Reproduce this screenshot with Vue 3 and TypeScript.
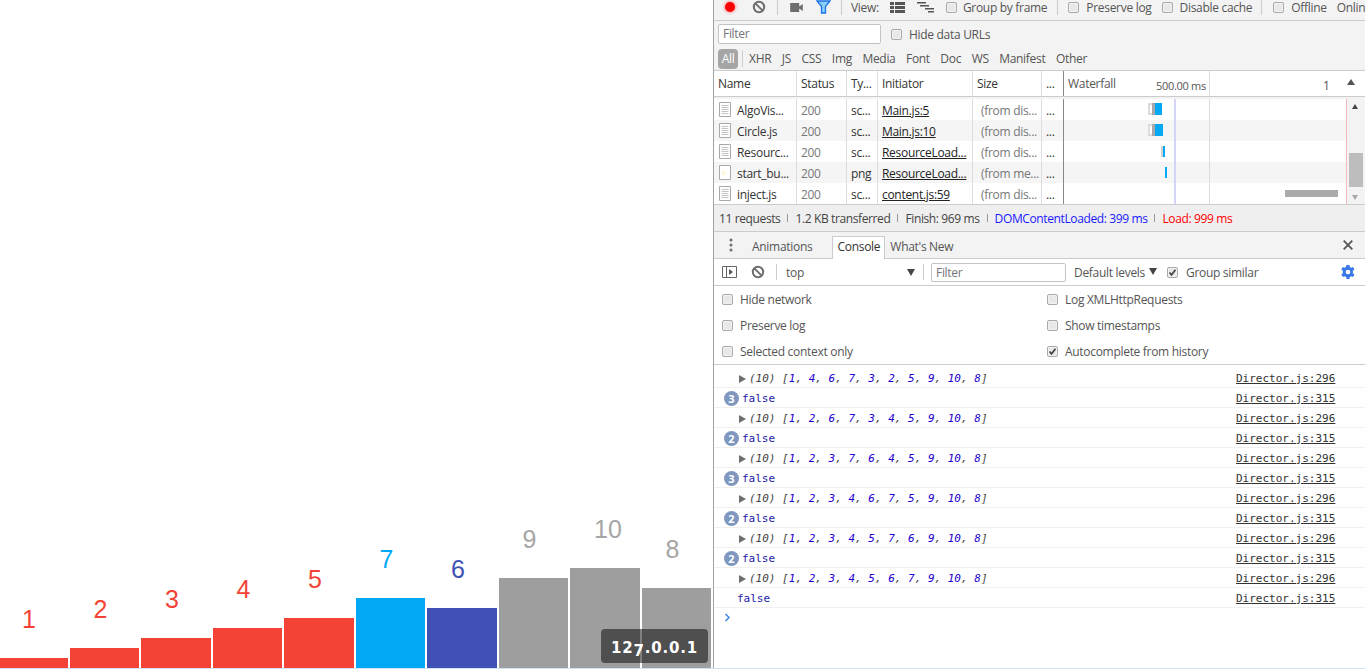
<script setup lang="ts">
interface Bar { value: number; color: string }
interface WfBar { left: number; width: number; top: number; height: number; color: string }
interface NetRow { name: string; type: string; initiator: string; size: string; icon: 'doc' | 'img'; bars: WfBar[] }
interface LogRow { kind: 'array' | 'false'; nums?: number[]; count?: number; file: string }

const RED = '#f44336'
const CYAN = '#03a9f4'
const INDIGO = '#3f51b5'
const GREY = '#9e9e9e'

const bars: Bar[] = [
  { value: 1, color: RED }, { value: 2, color: RED }, { value: 3, color: RED }, { value: 4, color: RED },
  { value: 5, color: RED }, { value: 7, color: CYAN }, { value: 6, color: INDIGO }, { value: 9, color: GREY },
  { value: 10, color: GREY }, { value: 8, color: GREY },
]

const queued = (end: number): WfBar[] => [
  { left: 84, width: 8, top: 4, height: 12, color: '#dcdcdc' },
  { left: 86, width: 2, top: 6, height: 8, color: '#ffffff' },
  { left: 88, width: 3, top: 4, height: 12, color: '#a8a8a8' },
  { left: 91, width: end, top: 4, height: 12, color: CYAN },
]

const netRows: NetRow[] = [
  { name: 'AlgoVis...', type: 'sc...', initiator: 'Main.js:5', size: '(from dis...', icon: 'doc', bars: queued(7) },
  { name: 'Circle.js', type: 'sc...', initiator: 'Main.js:10', size: '(from dis...', icon: 'doc', bars: queued(8) },
  { name: 'Resourc...', type: 'sc...', initiator: 'ResourceLoad...', size: '(from dis...', icon: 'doc', bars: [
    { left: 97, width: 2, top: 5, height: 11, color: '#d0d0d0' }, { left: 99, width: 2, top: 5, height: 11, color: CYAN } ] },
  { name: 'start_bu...', type: 'png', initiator: 'ResourceLoad...', size: '(from me...', icon: 'img', bars: [
    { left: 101, width: 2, top: 5, height: 11, color: CYAN } ] },
  { name: 'inject.js', type: 'sc...', initiator: 'content.js:59', size: '(from dis...', icon: 'doc', bars: [
    { left: 221, width: 53, top: 7, height: 7, color: '#aaaaaa' } ] },
]

const netColumns = ['Name', 'Status', 'Ty...', 'Initiator', 'Size', '...']

const settingsLeft = [
  { label: 'Hide network', on: false }, { label: 'Preserve log', on: false }, { label: 'Selected context only', on: false },
]
const settingsRight = [
  { label: 'Log XMLHttpRequests', on: false }, { label: 'Show timestamps', on: false }, { label: 'Autocomplete from history', on: true },
]

const logs: LogRow[] = [
  { kind: 'array', nums: [1, 4, 6, 7, 3, 2, 5, 9, 10, 8], file: 'Director.js:296' },
  { kind: 'false', count: 3, file: 'Director.js:315' },
  { kind: 'array', nums: [1, 2, 6, 7, 3, 4, 5, 9, 10, 8], file: 'Director.js:296' },
  { kind: 'false', count: 2, file: 'Director.js:315' },
  { kind: 'array', nums: [1, 2, 3, 7, 6, 4, 5, 9, 10, 8], file: 'Director.js:296' },
  { kind: 'false', count: 3, file: 'Director.js:315' },
  { kind: 'array', nums: [1, 2, 3, 4, 6, 7, 5, 9, 10, 8], file: 'Director.js:296' },
  { kind: 'false', count: 2, file: 'Director.js:315' },
  { kind: 'array', nums: [1, 2, 3, 4, 5, 7, 6, 9, 10, 8], file: 'Director.js:296' },
  { kind: 'false', count: 2, file: 'Director.js:315' },
  { kind: 'array', nums: [1, 2, 3, 4, 5, 6, 7, 9, 10, 8], file: 'Director.js:296' },
  { kind: 'false', file: 'Director.js:315' },
]

const types = ['XHR', 'JS', 'CSS', 'Img', 'Media', 'Font', 'Doc', 'WS', 'Manifest', 'Other']
</script>

<template>
  <div class="page">
    <div class="main">
      <section class="viz">
        <div class="bars">
          <div v-for="bar in bars" :key="bar.value" class="col">
            <span class="num" :style="{ color: bar.color === GREY ? '#a6a6a6' : bar.color }">{{ bar.value }}</span>
            <div class="bar" :style="{ height: bar.value * 10 + 'px', background: bar.color }"></div>
          </div>
        </div>
        <div class="host">12<span class="low">7</span>.0.0.1</div>
      </section>

      <section class="devtools">
        <!-- network panel -->
        <div class="toolbar net-top">
          <span class="record"></span>
          <svg class="ico block1" width="14" height="14" viewBox="0 0 14 14"><circle cx="7" cy="7" r="5.2" fill="none" stroke="#6e6e6e" stroke-width="2" /><path d="M3.4 3.4l7.2 7.2" stroke="#6e6e6e" stroke-width="2" /></svg>
          <i class="sep sep1"></i>
          <svg class="ico cam" width="13" height="9" viewBox="0 0 14 10"><path d="M0 0h10v10H0zM10 4l4-3v8l-4-3z" fill="#6e6e6e" /></svg>
          <svg class="ico funnel" width="15" height="14" viewBox="0 0 15 14"><path d="M1 1h13L9.5 6.5V13h-4V6.500z" fill="#8ccdf7" stroke="#1a73e8" stroke-width="1.300" /></svg>
          <i class="sep sep2"></i>
          <span class="txt view">View:</span>
          <svg class="ico list" width="15" height="11" viewBox="0 0 15 11"><path d="M0 0h4v3H0zM5 0h10v3H5zM0 4h4v3H0zM5 4h10v3H5zM0 8h4v3H0zM5 8h10v3H5z" fill="#555" /></svg>
          <svg class="ico tree" width="17" height="11" viewBox="0 0 17 11"><path d="M0 0h9v1.500H0zM3 3h9v1.500H3zM8 6h9v1.500H8zM11 9h6v1.500h-6z" fill="#555" /></svg>
          <span class="check c-group"></span><span class="txt">Group by frame</span>
          <i class="sep sep3"></i>
          <span class="check c-pres"></span><span class="txt">Preserve log</span>
          <span class="check c-dis"></span><span class="txt">Disable cache</span>
          <i class="sep sep4"></i>
          <span class="check c-off"></span><span class="txt">Offline</span>
          <span class="txt online">Online</span>
        </div>

        <div class="filter-row">
          <span class="input net-filter">Filter</span>
          <span class="check c-hide"></span><span class="txt">Hide data URLs</span>
        </div>

        <div class="type-row">
          <span class="all">All</span>
          <i class="sep sep-all"></i>
          <span v-for="t in types" :key="t" class="txt type">{{ t }}</span>
        </div>

        <div class="net-head">
          <span v-for="c in netColumns" :key="c" class="cell">{{ c }}</span>
          <div class="wf-head">
            <span class="txt wf-title">Waterfall</span>
            <span class="txt wf-time">500.00 ms</span>
            <span class="txt wf-one">1</span>
            <i class="tri-up"></i>
          </div>
        </div>

        <div class="net-body">
          <div class="net-table">
            <div v-for="(row, i) in netRows" :key="row.name" class="net-row" :class="{ odd: i % 2 === 1 }">
              <span class="cell name-cell">
                <svg width="12" height="15" viewBox="0 0 12 15" class="file-ico">
                  <path d="M.5.500h11v14H.5z" fill="#fff" stroke="#a9a9a9" />
                  <path v-if="row.icon === 'doc'" d="M2.500 3.500h7M2.500 5.500h7M2.500 7.500h7M2.500 9.500h7M2.500 11.500h7" stroke="#c4c4c4" />
                  <path v-else d="M3 5l5 3-5 3z" fill="#fdf6d8" />
                </svg>
                {{ row.name }}
              </span>
              <span class="cell muted">200</span>
              <span class="cell">{{ row.type }}</span>
              <span class="cell link">{{ row.initiator }}</span>
              <span class="cell muted size">{{ row.size }}</span>
              <span class="cell">...</span>
              <div class="wf-cell">
                <i v-for="(b, j) in row.bars" :key="j" class="wf-bar" :style="{ left: b.left + 'px', width: b.width + 'px', top: b.top + 'px', height: b.height + 'px', background: b.color }"></i>
              </div>
            </div>
            <i class="grid-line blue"></i>
            <i class="grid-line gray"></i>
            <i class="grid-line red"></i>
          </div>
          <div class="scroll">
            <i class="tri-up small"></i>
            <i class="thumb"></i>
            <i class="tri-down"></i>
          </div>
        </div>

        <div class="summary">
          <span>11 requests</span><i class="bar-sep"></i>
          <span>1.2 KB transferred</span><i class="bar-sep"></i>
          <span>Finish: 969 ms</span><i class="bar-sep"></i>
          <span class="dom">DOMContentLoaded: 399 ms</span><i class="bar-sep"></i>
          <span class="load">Load: 999 ms</span>
        </div>

        <!-- drawer -->
        <div class="tabs">
          <svg class="ico kebab" width="4" height="14" viewBox="0 0 4 14"><circle cx="2" cy="2" r="1.500" fill="#6e6e6e" /><circle cx="2" cy="7" r="1.500" fill="#6e6e6e" /><circle cx="2" cy="12" r="1.500" fill="#6e6e6e" /></svg>
          <span class="txt tab-anim">Animations</span>
          <span class="tab-on">Console</span>
          <span class="txt tab-new">What's New</span>
          <svg class="ico close" width="10" height="10" viewBox="0 0 10 10"><path d="M.700.700l8.600 8.600M9.300.700L.700 9.300" stroke="#555" stroke-width="1.800" /></svg>
        </div>

        <div class="con-bar">
          <svg class="ico side" width="15" height="12" viewBox="0 0 15 12"><path d="M.5.500h14v11H.5zM4.500.500v11" fill="none" stroke="#666" /><path d="M7 3l4 3-4 3z" fill="#555" /></svg>
          <svg class="ico block2" width="14" height="14" viewBox="0 0 14 14"><circle cx="7" cy="7" r="5.200" fill="none" stroke="#6e6e6e" stroke-width="2" /><path d="M3.400 3.400l7.200 7.200" stroke="#6e6e6e" stroke-width="2" /></svg>
          <i class="sep sep5"></i>
          <span class="txt ctx">top</span>
          <i class="tri-dn-big"></i>
          <i class="sep sep6"></i>
          <span class="input con-filter">Filter</span>
          <span class="txt levels">Default levels</span>
          <i class="tri-dn-big lv"></i>
          <span class="check on c-sim"><svg width="11" height="11" viewBox="0 0 11 11"><path d="M2.500 5.500l2 2.300L8.500 2.800" fill="none" stroke="#444" stroke-width="1.700" /></svg></span>
          <span class="txt">Group similar</span>
          <svg class="ico gear" width="14" height="14" viewBox="0 0 24 24"><path fill="#3b78e7" fill-rule="evenodd" d="M14.500 0l.6 3.400c.8.300 1.500.700 2.200 1.200l3.200-1.200 2.500 4.300-2.700 2.200a9 9 0 0 1 0 4.200l2.700 2.200-2.500 4.300-3.200-1.200c-.7.500-1.400.900-2.200 1.200l-.6 3.400h-5l-.6-3.400c-.8-.3-1.500-.7-2.200-1.200l-3.200 1.200L.5 16.300l2.700-2.200a9 9 0 0 1 0-4.200L.5 7.700 3 3.400l3.200 1.200c.7-.5 1.400-.9 2.200-1.200L9.500 0zM12 8a4 4 0 1 0 0 8 4 4 0 0 0 0-8z" /></svg>
        </div>

        <div class="settings">
          <div class="set-col">
            <label v-for="s in settingsLeft" :key="s.label" class="set-item"><span class="check"></span><span class="txt">{{ s.label }}</span></label>
          </div>
          <div class="set-col right">
            <label v-for="s in settingsRight" :key="s.label" class="set-item">
              <span class="check" :class="{ on: s.on }"><svg v-if="s.on" width="11" height="11" viewBox="0 0 11 11"><path d="M2.500 5.500l2 2.300L8.500 2.800" fill="none" stroke="#444" stroke-width="1.700" /></svg></span>
              <span class="txt">{{ s.label }}</span>
            </label>
          </div>
        </div>

        <div class="log">
          <div v-for="(row, i) in logs" :key="i" class="log-row">
            <template v-if="row.kind === 'array'">
              <i class="tri-right"></i>
              <span class="arr"><span class="dim">(10) [</span><template v-for="(n, k) in row.nums" :key="k"><span class="val">{{ n }}</span><span v-if="k < 9" class="dim">, </span></template><span class="dim">]</span></span>
            </template>
            <template v-else>
              <span v-if="row.count" class="badge">{{ row.count }}</span>
              <span class="val" :class="{ plain: !row.count }">false</span>
            </template>
            <span class="src">{{ row.file }}</span>
          </div>
          <svg class="prompt" width="7" height="9" viewBox="0 0 7 9"><path d="M1.500 1l3.500 3.500L1.500 8" fill="none" stroke="#3b88e8" stroke-width="1.500" /></svg>
        </div>
      </section>
    </div>
    <div class="edge"></div>
  </div>
</template>

<style>
html, body { margin: 0; background: #fff; overflow: hidden; }
</style>

<style scoped>
.page { width: 1365px; height: 669px; display: flex; flex-direction: column; overflow: hidden; }
.main { flex: 1; display: flex; min-height: 0; }
.edge { height: 1px; background: #d3e4f5; }

.viz { width: 713px; flex: none; position: relative; overflow: hidden; display: flex; align-items: flex-end; }
.bars { display: flex; align-items: flex-end; gap: 2px; margin-left: -2px; }
.col { width: 69.5px; display: flex; flex-direction: column; }
.num { font: 25px/28px "Liberation Sans", Arial, sans-serif; padding-left: 24px; margin-bottom: 25px; }
.host {
  position: absolute; left: 601px; top: 629px; width: 107px; height: 34px; border-radius: 4px;
  background: rgba(0, 0, 0, .5); color: #fff; font: 700 15px/38px "DejaVu Sans", sans-serif;
  text-align: center; letter-spacing: .8px; white-space: nowrap;
}
.low { vertical-align: -3px; line-height: 0; }

.devtools {
  flex: 1; min-width: 0; display: flex; flex-direction: column; overflow: hidden; border-left: 1px solid #a3a3a3;
  font: 12px "Open Sans", sans-serif; color: #333; background: #fff; letter-spacing: -.3px;
}
.txt { color: #555; white-space: nowrap; }
.ico { flex: none; display: block; }
.sep { flex: none; width: 1px; height: 16px; background: #ccc; display: block; }
.check { flex: none; width: 9px; height: 9px; border: 1px solid #aaa; border-radius: 2px; background: #e8e8e8; display: block; box-shadow: inset 0 0 0 1px #f2f2f2; position: relative; }
.check svg { position: absolute; left: -1px; top: -1px; }
.input { display: block; box-sizing: border-box; border: 1px solid #c4c4c4; border-radius: 2px; background: #fff; color: #757575; padding-left: 4px; }

.toolbar { display: flex; align-items: center; height: 14px; padding-bottom: 6px; background: #f3f3f3; border-bottom: 1px solid #ccc; white-space: nowrap; }
.record { flex: none; width: 10px; height: 10px; border-radius: 50%; background: #f00; box-shadow: 0 0 3px 1px #f5a0a0; margin-left: 11px; }
.block1 { margin-left: 17px; }
.sep1 { margin-left: 11px; }
.cam { margin-left: 12px; }
.funnel { margin-left: 13px; }
.sep2 { margin-left: 10px; }
.view { margin-left: 9px; }
.list { margin-left: 11px; }
.tree { margin-left: 12px; }
.c-group { margin: 0 6px 0 12px; }
.sep3 { margin-left: 10px; }
.c-pres { margin: 0 7px 0 10px; }
.c-dis { margin: 0 7px 0 10px; }
.sep4 { margin-left: 9px; }
.c-off { margin: 0 7px 0 11px; }
.online { margin-left: 10px; }

.filter-row { height: 26px; display: flex; align-items: center; background: #f3f3f3; }
.net-filter { width: 163px; height: 20px; line-height: 18px; margin-left: 4px; }
.c-hide { margin: 0 7px 0 10px; }

.type-row { height: 23px; display: flex; align-items: center; background: #f3f3f3; border-bottom: 1px solid #ccc; }
.all { width: 20px; height: 20px; margin-left: 4px; background: #a6a6a6; color: #fff; border-radius: 4px; text-align: center; line-height: 20px; }
.sep-all { margin: 0 6px 0 4px; }
.type { margin-right: 10.500px; }

.net-head { height: 25px; display: flex; align-items: center; background: #fff; border-bottom: 1px solid #ccc; }
.cell { box-sizing: border-box; padding-left: 4px; white-space: nowrap; border-right: 1px solid #ddd; height: 100%; line-height: 26px; flex: none; overflow: hidden; }
.cell:nth-child(1) { width: 83px; }
.cell:nth-child(2) { width: 50px; }
.cell:nth-child(3) { width: 31px; }
.cell:nth-child(4) { width: 95px; }
.cell:nth-child(5) { width: 69px; }
.cell:nth-child(6) { width: 22px; border-right: 1px solid #888; }
.wf-head { flex: 1; display: flex; align-items: center; height: 100%; position: relative; }
.wf-title { margin-left: 4px; width: 88px; }
.wf-time { box-sizing: border-box; width: 54px; border-right: 1px solid #ddd; height: 100%; line-height: 29px; font-size: 11px; }
.wf-one { margin-left: 113px; line-height: 29px; height: 100%; }
.tri-up { width: 0; height: 0; border: 4px solid transparent; border-top: 0; border-bottom: 6px solid #555; margin-left: 17px; margin-top: -3px; display: block; }

.net-body { height: 108px; padding-top: 2px; box-sizing: border-box; display: flex; background: #f3f3f3; border-bottom: 1px solid #ccc; }
.net-table { flex: 1; position: relative; background: #fff; }
.net-row { height: 21px; display: flex; background: #fff; color: #333; }
.net-row.odd { background: #f5f5f5; }
.net-row .cell { line-height: 23px; }
.muted { color: #777; }
.name-cell { display: flex; align-items: center; gap: 6px; padding: 2px 0 0 5px; color: #333; }
.file-ico { flex: none; margin-top: -2px; }
.link { text-decoration: underline; color: #222; }
.cell.size { padding-left: 8px; }
.wf-cell { flex: 1; position: relative; }
.wf-bar { position: absolute; display: block; }
.grid-line { position: absolute; top: 0; bottom: 0; width: 1px; display: block; }
.grid-line.blue { left: 460px; width: 2px; background: #d4d4f7; }
.grid-line.gray { left: 495px; background: #dcdcdc; }
.grid-line.red { left: 632px; background: #f7b8b8; }
.scroll { width: 18px; flex: none; position: relative; background: #f3f3f3; }
.tri-up.small { position: absolute; left: 5px; top: 5px; margin: 0; border-width: 0 3.500px 5px; border-style: solid; border-color: transparent transparent #444; }
.thumb { position: absolute; left: 2px; top: 54px; width: 14px; height: 34px; background: #bdbdbd; display: block; }
.tri-down { position: absolute; left: 5px; bottom: 4px; border-style: solid; border-width: 5px 3.500px 0; border-color: #a8a8a8 transparent transparent; display: block; }

.summary { height: 26px; display: flex; align-items: center; padding-left: 5px; background: #efefef; border-bottom: 1px solid #ccc; color: #444; white-space: nowrap; letter-spacing: -.38px; }
.bar-sep { display: block; width: 1px; height: 8px; background: #999; margin: 0 7px; }
.dom { color: #1a1aff; }
.load { color: #f00; }

.tabs { height: 26px; display: flex; align-items: flex-end; background: #f3f3f3; border-bottom: 1px solid #ccc; position: relative; }
.kebab { margin: 0 0 6px 15px; }
.tab-anim { margin: 0 0 3px 19px; }
.tab-on { box-sizing: border-box; width: 53px; height: 23px; margin: 0 0 -1px 20px; border: 1px solid #ccc; border-bottom: 0; background: #fff; line-height: 19px; text-align: center; color: #333; }
.tab-new { margin: 0 0 3px 5px; }
.close { margin: 0 12px 8px auto; }

.con-bar { height: 26px; display: flex; align-items: center; background: #fff; border-bottom: 1px solid #ccc; white-space: nowrap; }
.side { margin-left: 8px; }
.block2 { margin-left: 14px; }
.sep5 { margin-left: 11px; }
.ctx { margin-left: 9px; width: 121px; }
.tri-dn-big { flex: none; display: block; width: 0; height: 0; border-style: solid; border-width: 7px 4.500px 0; border-color: #444 transparent transparent; }
.sep6 { margin-left: 8px; }
.con-filter { width: 135px; height: 19px; line-height: 17px; margin-left: 7px; }
.levels { margin-left: 8px; }
.tri-dn-big.lv { margin-left: 4px; margin-bottom: 2px; }
.c-sim { margin: 0 8px 0 10px; }
.gear { margin-left: auto; margin-right: 10px; }

.settings { height: 78px; display: flex; border-bottom: 1px solid #ccc; padding-left: 8px; }
.set-col { width: 325px; display: flex; flex-direction: column; }
.set-col.right { width: auto; }
.set-item { height: 26px; display: flex; align-items: center; gap: 7px; }

.log { flex: 1; font: 11px/17px "DejaVu Sans Mono", "Liberation Mono", monospace; letter-spacing: 0; padding-top: 3px; position: relative; }
.log-row { height: 17px; padding-top: 2px; border-bottom: 1px solid #f0f0f0; display: flex; align-items: center; position: relative; }
.tri-right { display: block; width: 0; height: 0; margin-left: 25px; border-style: solid; border-width: 4px 0 4px 7px; border-color: transparent transparent transparent #6e6e6e; }
.arr { font-style: italic; margin-left: 3px; white-space: pre; }
.dim { color: #444; }
.val { color: #1c1caa; }
.arr .val { color: #1c00cf; }
.badge { display: block; box-sizing: border-box; width: 15px; height: 15px; border-radius: 50%; background: #7f97bf; color: #fff; font: 700 11px/15px "Open Sans", sans-serif; text-align: center; margin: 0 3px 0 10px; }
.val.plain { margin-left: 23px; }
.src { position: absolute; left: 522px; color: #333; text-decoration: underline; }
.prompt { display: block; margin: 5px 0 0 10px; }
</style>
